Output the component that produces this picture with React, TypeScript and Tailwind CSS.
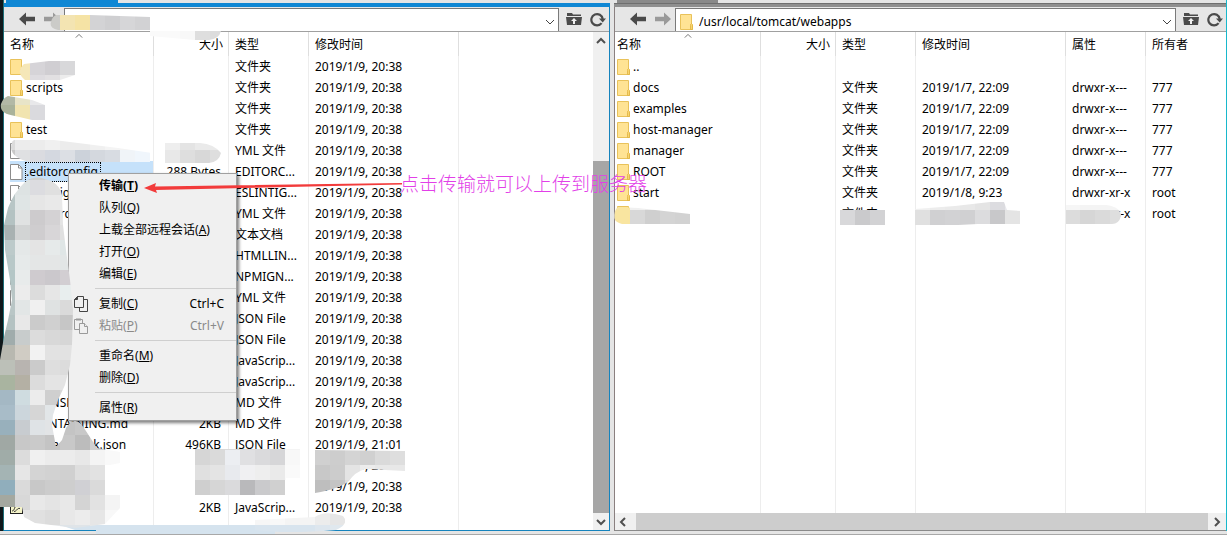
import React from 'react';

interface FileRow {
  name: string;
  kind?: 'folder' | 'file' | 'script' | 'none';
  size?: string;
  type?: string;
  time?: string;
  perm?: string;
  owner?: string;
  selected?: boolean;
}

const T = '2019/1/9, 20:38';

const localFiles: FileRow[] = [
  { name: '', kind: 'folder', type: '文件夹', time: T },
  { name: 'scripts', kind: 'folder', type: '文件夹', time: T },
  { name: '', kind: 'none', type: '文件夹', time: T },
  { name: 'test', kind: 'folder', type: '文件夹', time: T },
  { name: '', kind: 'file', type: 'YML 文件', time: T },
  { name: '.editorconfig', kind: 'file', size: '288 Bytes', type: 'EDITORC...', time: T, selected: true },
  { name: '.eslintignore', kind: 'file', type: 'ESLINTIG...', time: T },
  { name: '.eslintrc.yml', kind: 'file', type: 'YML 文件', time: T },
  { name: '', kind: 'file', type: '文本文档', time: T },
  { name: '', kind: 'file', type: 'HTMLLIN...', time: T },
  { name: '', kind: 'file', type: 'NPMIGN...', time: T },
  { name: '', kind: 'file', type: 'YML 文件', time: T },
  { name: '', kind: 'none', type: 'JSON File', time: T },
  { name: '', kind: 'none', type: 'JSON File', time: T },
  { name: '', kind: 'none', type: 'JavaScrip...', time: T },
  { name: '', kind: 'none', type: 'JavaScrip...', time: T },
  { name: 'LICENSE.md', kind: 'none', type: 'MD 文件', time: T },
  { name: 'MAINTAINING.md', kind: 'none', size: '2KB', type: 'MD 文件', time: T },
  { name: 'package-lock.json', kind: 'none', size: '496KB', type: 'JSON File', time: '2019/1/9, 21:01' },
  { name: '', kind: 'none', time: T },
  { name: '', kind: 'none', time: T },
  { name: '', kind: 'script', size: '2KB', type: 'JavaScrip...', time: T },
];

const remoteFiles: FileRow[] = [
  { name: '..', kind: 'folder' },
  { name: 'docs', kind: 'folder', type: '文件夹', time: '2019/1/7, 22:09', perm: 'drwxr-x---', owner: '777' },
  { name: 'examples', kind: 'folder', type: '文件夹', time: '2019/1/7, 22:09', perm: 'drwxr-x---', owner: '777' },
  { name: 'host-manager', kind: 'folder', type: '文件夹', time: '2019/1/7, 22:09', perm: 'drwxr-x---', owner: '777' },
  { name: 'manager', kind: 'folder', type: '文件夹', time: '2019/1/7, 22:09', perm: 'drwxr-x---', owner: '777' },
  { name: 'ROOT', kind: 'folder', type: '文件夹', time: '2019/1/7, 22:09', perm: 'drwxr-x---', owner: '777' },
  { name: 'start', kind: 'folder', type: '文件夹', time: '2019/1/8, 9:23', perm: 'drwxr-xr-x', owner: 'root' },
  { name: '', kind: 'folder', type: '文件夹', perm: 'drwxr-xr-x', owner: 'root' },
];

/* ---------- icons ---------- */

const FolderIcon = () => (
  <svg className="h-4 w-[13px] shrink-0" viewBox="0 0 13 16">
    <path d="M.5 .5h11v11h1v4H.5z" fill="#ffe394" stroke="#e9c25a" />
    <path d="M10.5 11.5v-1l1-1 1 1v5h-2z" fill="#f7d46f" stroke="#dfb341" strokeWidth=".8" />
  </svg>
);

const FileIcon = () => (
  <svg className="h-4 w-[13px] shrink-0" viewBox="0 0 13 16">
    <path d="M.5 .5h8l3.500 3.500v11.500H.5z" fill="#fff" stroke="#8c8c8c" />
    <path d="M8.5 .5v3.500h3.500" fill="none" stroke="#8c8c8c" />
  </svg>
);

const ScriptIcon = () => (
  <svg className="h-4 w-[13px] shrink-0" viewBox="0 0 13 16">
    <rect x=".5" y="2.5" width="12" height="11" fill="#f4f3c8" stroke="#222" />
    <path d="M2 11c3 0 2-5 5-6 2 0 3 1 4 0M4 11.500c3 0 3-4 6-3M3 5l2 1" fill="none" stroke="#333" />
  </svg>
);

const ArrowIcon = ({ flip = false }: { flip?: boolean }) => (
  <svg className={flip ? 'h-4 w-4 text-[#9a9a9a]' : 'h-4 w-4 text-[#4a4a4a]'} viewBox="0 0 16 16" fill="currentColor">
    <path d={flip ? 'M16 8 9 1.500v4.200H0v4.600h9v4.200z' : 'M0 8l7-6.500v4.200h9v4.600H7v4.200z'} />
  </svg>
);

const UpFolderIcon = () => (
  <svg className="h-4 w-4" viewBox="0 0 16 16">
    <path d="M1 2h5l1 1.500h8V5H1zM0 6h16l-1 8H1z" fill="#4b4b4b" />
    <path d="M8 7l3 3H9v3H7v-3H5z" fill="#f0f0f0" />
  </svg>
);

const RefreshIcon = () => (
  <svg className="h-4 w-4" viewBox="0 0 16 16">
    <path d="M11.600 12.200A5.700 5.700 0 1 1 12.700 8" fill="none" stroke="#4b4b4b" strokeWidth="2.200" />
    <path d="M9 7.500h7l-3.300 4z" fill="#4b4b4b" />
  </svg>
);

const Chevron = ({ d, className }: { d: string; className: string }) => (
  <svg className={className} viewBox="0 0 10 10" fill="none" stroke="currentColor">
    <path d={d} />
  </svg>
);

const UP = 'M1 7l4-4 4 4';
const DOWN = 'M1 3l4 4 4-4';
const LEFT = 'M7 1L3 5l4 4';
const RIGHT = 'M3 1l4 4-4 4';

const CopyIcon = () => (
  <svg className="h-4 w-4" viewBox="0 0 16 16" fill="#f0f0f0" stroke="#444">
    <path d="M6.500 3.500h8v12h-8z" />
    <path d="M4.500 .5h6v11h-9v-8z" />
    <path d="M4.500 .5v3h-3z" fill="#444" />
  </svg>
);

const PasteIcon = () => (
  <svg className="h-4 w-4" viewBox="0 0 16 16" fill="#f0f0f0" stroke="#9a9a9a">
    <path d="M1.500 1.500h8v10h-8z" />
    <path d="M3 1.500h5" strokeWidth="2" />
    <path d="M6.500 5.500h5l3 3v7h-8z" />
    <path d="M11.500 5.500v3h3" />
  </svg>
);

/* ---------- panes ---------- */

function Toolbar({ label, path, withFolder }: { label: string; path: string; withFolder?: boolean }) {
  return (
    <div className="flex h-[25px] shrink-0 border-b border-[#a0a0a0] bg-[#e6e6e6] pl-[15px] pr-[3px]">
      <div className="flex items-center gap-[9px]">
        <button type="button" aria-label="后退"><ArrowIcon /></button>
        <button type="button" aria-label="前进"><ArrowIcon flip /></button>
      </div>
      <div className="ml-1 mt-px flex min-w-0 flex-1 items-center border border-b-0 border-[#7a7a7a] bg-white pl-1 pt-1">
        {withFolder && <FolderIcon />}
        <input
          aria-label={label}
          defaultValue={path}
          className="ml-1.5 min-w-0 flex-1 bg-transparent text-[12px] leading-5 outline-none"
        />
        <button type="button" aria-label="展开路径" className="px-[3px]">
          <Chevron d={DOWN} className="h-2.5 w-2.5 text-[#444]" />
        </button>
      </div>
      <div className="ml-[7px] flex items-center gap-2">
        <button type="button" aria-label="上级目录"><UpFolderIcon /></button>
        <button type="button" aria-label="刷新"><RefreshIcon /></button>
      </div>
    </div>
  );
}

interface FileTableProps {
  rows: FileRow[];
  remote?: boolean;
}

function FileTable({ rows, remote = false }: FileTableProps) {
  const line = 'border-r border-[#ededed]';
  const cell = `${line} overflow-hidden whitespace-nowrap pl-1.5`;
  const head = 'relative border-r border-[#dedede] pl-1.5 text-left font-normal';
  const first = remote ? 'pl-[2px]' : 'pl-[6px]';

  return (
    <table className="h-full w-full table-fixed border-separate border-spacing-0 text-[12px] leading-[21px] text-black">
      <colgroup>
        <col className={remote ? 'w-[146px]' : 'w-[150px]'} />
        <col className="w-[75px]" />
        <col className="w-[80px]" />
        <col className="w-[150px]" />
        {remote && <col className="w-[80px]" />}
        <col />
      </colgroup>
      <thead>
        <tr className="h-6">
          <th className={`relative border-r border-[#dedede] text-left font-normal ${first}`}>
            名称
            <Chevron d={UP} className="absolute left-1/2 top-0 h-2 w-2 -translate-x-1/2 text-[#555]" />
          </th>
          <th className="border-r border-[#dedede] pr-[5px] text-right font-normal">大小</th>
          <th className={head}>类型</th>
          <th className={head}>修改时间</th>
          {remote && <th className={head}>属性</th>}
          <th className="pl-1.5 text-left font-normal">{remote ? '所有者' : ''}</th>
        </tr>
      </thead>
      <tbody>
        {rows.map((r, i) => (
          <tr key={i} className="h-[21px]">
            <td className={`${line} ${first} overflow-hidden`}>
              <div className={r.selected ? 'flex h-[21px] items-center bg-[#c5e1fa]' : 'flex h-[21px] items-center'}>
                {r.kind === 'folder' && <FolderIcon />}
                {r.kind === 'file' && <FileIcon />}
                {r.kind === 'script' && <ScriptIcon />}
                {r.kind === 'none' && <span className="w-[13px] shrink-0" />}
                <span
                  className={
                    r.selected
                      ? 'ml-0.5 whitespace-nowrap border border-dotted border-black pr-0.5 leading-[18px]'
                      : 'ml-[3px] whitespace-nowrap'
                  }
                >
                  {r.name}
                </span>
              </div>
            </td>
            <td className={`${line} whitespace-nowrap pr-[7px] text-right`}>{r.size}</td>
            <td className={cell}>{r.type}</td>
            <td className={cell}>{r.time}</td>
            {remote && <td className={cell}>{r.perm}</td>}
            <td className="pl-1.5">{r.owner}</td>
          </tr>
        ))}
        {/* filler keeps the column rules running to the bottom */}
        <tr>
          <td className={line} />
          <td className={line} />
          <td className={line} />
          <td className={line} />
          {remote && <td className={line} />}
          <td />
        </tr>
      </tbody>
    </table>
  );
}

function LocalPane() {
  return (
    <section className="flex min-w-0 flex-col" aria-label="本地">
      <div className="h-[3px] shrink-0 bg-[#e5e5e5] pl-0.5">
        <div className="h-full w-28 bg-[#0f87d4]" />
      </div>
      <div className="h-1 shrink-0 bg-[#0f87d4]" />
      <div className="flex min-h-0 flex-1 flex-col border-b border-r border-[#1583bd] bg-white">
        <Toolbar label="本地路径" path="" />
        <div className="flex min-h-0 flex-1">
          <div className="min-w-0 flex-1"><FileTable rows={localFiles} /></div>
          <div className="flex w-4 shrink-0 flex-col items-center bg-[#f0f0f0]">
            <button type="button" aria-label="向上滚动" className="flex h-[18px] items-center">
              <Chevron d={UP} className="h-2.5 w-2.5 stroke-2 text-[#505050]" />
            </button>
            <div className="flex min-h-0 w-full flex-1 flex-col justify-end">
              <div className="h-[76%] bg-[#a6a6a6]" />
            </div>
            <button type="button" aria-label="向下滚动" className="flex h-[17px] items-center">
              <Chevron d={DOWN} className="h-2.5 w-2.5 stroke-2 text-[#505050]" />
            </button>
          </div>
        </div>
      </div>
    </section>
  );
}

function RemotePane() {
  return (
    <section className="flex min-w-0 flex-col" aria-label="远程">
      <div className="h-[3px] shrink-0 bg-[#e5e5e5] pl-[3px]">
        <div className="h-full w-[101px] bg-[#8a8a8a]" />
      </div>
      <div className="h-1 shrink-0 border-t border-[#6f6f6f] bg-[#8f8f8f]" />
      <div className="flex min-h-0 flex-1 flex-col border-b border-l border-b-[#8a8a8a] border-l-[#8a8080] bg-white">
        <Toolbar label="远程路径" path="/usr/local/tomcat/webapps" withFolder />
        <div className="min-h-0 flex-1"><FileTable rows={remoteFiles} remote /></div>
        <div className="flex h-[17px] shrink-0 items-center bg-[#f0f0f0]">
          <button type="button" aria-label="向左滚动" className="pl-[3px] pr-2">
            <Chevron d={LEFT} className="h-2.5 w-2.5 stroke-2 text-[#505050]" />
          </button>
          <div className="h-full flex-1 bg-[#cdcdcd]" />
          <button type="button" aria-label="向右滚动" className="px-1">
            <Chevron d={RIGHT} className="h-2.5 w-2.5 stroke-2 text-[#505050]" />
          </button>
        </div>
      </div>
    </section>
  );
}

/* ---------- context menu ---------- */

interface MenuEntry {
  label: string;
  hot: string;
  keys?: string;
  icon?: React.ReactNode;
  bold?: boolean;
  disabled?: boolean;
}

const menuGroups: MenuEntry[][] = [
  [
    { label: '传输', hot: 'T', bold: true },
    { label: '队列', hot: 'Q' },
    { label: '上载全部远程会话', hot: 'A' },
    { label: '打开', hot: 'O' },
    { label: '编辑', hot: 'E' },
  ],
  [
    { label: '复制', hot: 'C', keys: 'Ctrl+C', icon: <CopyIcon /> },
    { label: '粘贴', hot: 'P', keys: 'Ctrl+V', icon: <PasteIcon />, disabled: true },
  ],
  [
    { label: '重命名', hot: 'M' },
    { label: '删除', hot: 'D' },
  ],
  [{ label: '属性', hot: 'R' }],
];

function ContextMenu() {
  return (
    <div
      role="menu"
      className="absolute left-[68px] top-[173px] w-[169px] border border-[#a0a0a0] bg-[#f0f0f0] py-px text-[12px] shadow-[2px_2px_3px_rgba(0,0,0,0.5)]"
    >
      {menuGroups.map((group, g) => (
        <div key={g}>
          {g > 0 && <div className="ml-[26px] h-1 border-b border-[#cfcfcf]" />}
          <div className={g > 0 ? 'pt-1' : ''}>
            {group.map((m) => (
              <button
                key={m.hot}
                type="button"
                role="menuitem"
                disabled={m.disabled}
                className={`flex h-[22px] w-full items-center pl-1 pr-3 text-left ${m.bold ? 'font-bold' : ''} ${
                  m.disabled ? 'text-[#8a8a8a]' : 'text-black'
                }`}
              >
                <span className="w-[26px] shrink-0">{m.icon}</span>
                <span className="flex-1 whitespace-nowrap">
                  {m.label}(<u className="underline-offset-1">{m.hot}</u>)
                </span>
                <span>{m.keys}</span>
              </button>
            ))}
          </div>
        </div>
      ))}
    </div>
  );
}

/* ---------- mosaic brush over private names ---------- */

interface Patch {
  id: string;
  x: number;
  y: number;
  clip: string;
  rows: string[];
}

const CELL = 15;

// each row is a list of cell colours, "-" leaves the cell open
const patches: Patch[] = [
  {
    id: 'names',
    x: 0,
    y: 165,
    clip: 'M25 182Q34 175 45 179Q59 182 62 195L63 225L66 250L70 280L73 310L72 345L70 365L65 385L58 400L53 415L52 425L56 447L62 440L66 428Q75 414 84 428L97 448L120 452V463L105 466V495H120V508L105 524L75 528L35 523L24 517L22 507H0V360L4 337L8 320L12 300L10 280L5 250L4 225L8 208Q14 192 25 182Z',
    rows: [
      '- bcc8c8 d0d0d0 d6d6d6',
      'b8c6c6 dde3e3 dcdce0 e0e0e0 e2e2e2',
      'b8c6c6 dfe5e5 e6e6e6 e9e9e9 e9e9e9',
      'b4c2c2 e0e2e2 cdcbcd d4d2d4 e4e4e4',
      'a9b2b2 d2d4d4 cfcdcf d8d6d8 e0e0e0',
      'bccaca e4e8e8 e4e4e4 e6eaea dfe6e6',
      'b8c8c8 e6eaea e4e6e6 e4e6e6 e2e6e6',
      'b4c6c6 e8ebeb cfcbcf cbc8cc d2ced2',
      'b9c6c6 ececec dcdcdc e6e6e6 e8eeee',
      'b9c6c6 e2e6e6 f0f0f0 dfe2e2 dadada',
      'b4c2c2 e8e8e8 cbcbcb d0d0d0 c6c6c6',
      'a0acac c8cccc dcdcdc d8d8d8 d6d6d6',
      'b8b8b0 d0ccc4 f2f2f2 e2e2e2 e2e2e2',
      'bcc0b8 b8b4b0 cbcbcb dedede dcdcdc',
      'a9b4a0 b4b0a4 dcdcdc e4e4e4 e4e4e4',
      'a4b8c4 cfdce0 ececec cfcfcf d8d8d8',
      'a8bcc8 ccd6dc d6d6d6 e2e6e8 e2e6e8',
      '98b0bc c8ccd0 dfe3e6 e2e4e6 c4c4c4 c8c8c8 cccccc',
      'a0a8a4 c8c8c8 cacaca c4c4c4 c8c8c8 bcbcbc d0d0d0',
      'a0aca8 dcdcdc f0f0f0 ececec ececec e8e8e8 f4f4f4 f9f9f9',
      'a4b4b4 e6e6e6 d4d4d4 d2d2d2 d0d0d0 dedede e2e2e2 -',
      '90aebc dadada c8c8c8 cccccc cecece d0d0d4 dadada -',
      'a4a8a0 d8d8d8 e8e8e8 e4e4e4 e8e8e8 d4d4d4 e2e2e2 f4f4f4',
      '- e4e4e4 e0e0e0 dcdcdc e8e8e8 ececec e6e6e6 f8f8f8',
      '- e8e8e8 e8e8e8 e4e6e8 dfe4e8 dfe4e8 e8e8e8 -',
    ],
  },
  {
    id: 'path',
    x: 45,
    y: 15,
    clip: 'M56 15h34l60 2v13H58q-9-2-7-8 1-5 5-7z',
    rows: ['cbcbc8 f3e4b2 f5e3a5 d3d3d5 cfcfd1 d6d6d8 d2d2d4'],
  },
  {
    id: 'dir0',
    x: 15,
    y: 60,
    clip: 'M24 64l25-3h26v14l-15 5H25q-10-8-1-16z',
    rows: ['f5e7b8 d6d4d8 d0ced2 d8d8da', 'f5e7b8 dedce0 e2e0e2 ececec'],
  },
  {
    id: 'dir2',
    x: 0,
    y: 90,
    clip: 'M8 96l24 4 13 5v18l-30-7q-16-2-14-12 2-6 7-8z',
    rows: ['b2b9a6 e8e4c8 e8e8ea', 'a9b29a f1e4b0 dadade'],
  },
  {
    id: 'yml',
    x: 0,
    y: 135,
    clip: 'M14 140h40l64 8 34 5v9H30q-18-4-19-14 0-6 3-8z',
    rows: ['dcdcdc ececec ececec f0f0f0 ececec ececec f0f0f0 f4f4f4 f4f4f4 -', 'c8c8c8 dfe0e2 dadbe0 d4d8e0 dcdfe4 ccd2da d4d8de d8dce2 f0f4f8 f0f6fc'],
  },
  {
    id: 'size4',
    x: 165,
    y: 135,
    clip: 'M165 143h35q14 1 21 10-2 9-12 10h-44z',
    rows: ['eeeeee e4e4e4 eaeaea eaeaea', 'e8e8e8 dedede d8d8d8 dedede'],
  },
  {
    id: 'head',
    x: 150,
    y: 30,
    clip: 'M150 31h71q-2 8-12 9h-14l-45-4z',
    rows: ['fafafa fafafa f8f8f8 dedede dcdcdc'],
  },
  {
    id: 'types',
    x: 180,
    y: 435,
    clip: 'M180 449h120v29h-14v17h-91v-45h-15z',
    rows: [
      '- d4d4d4 d8d8d8 dadada dadada dadada dadada f4f4f4',
      'ffffff d6d6d6 dadada eceef2 e0e0e2 dadadc d6d6d8 f8f8f8',
      '- e0e0e0 e4e4e4 e8eaee f0f0f2 eeeeee eaeaea fafafa',
      '- cfcfcf d6d6d6 dadadc b9b9bb cacacc d0d0d0 -',
    ],
  },
  {
    id: 'times',
    x: 315,
    y: 450,
    clip: 'M315 450l90 1v20q-20-1-40-2-10 3-16 12-10 8-34 12z',
    rows: ['d0d0d0 cdcdcd d4d4d4 d0d0d0 dadada dedede', 'c8c8c8 cccccc e4e4e4 ececec e8e8e8 e8e8e8', 'bebebe c4c4c4 dcdcdc e8e8e8 - -'],
  },
  {
    id: 'foot',
    x: 255,
    y: 510,
    clip: 'M255 520l60-3q10-7 28-1 7 8-7 14-50 4-81 0z',
    rows: ['f6f6f6 f8f8f8 f4f4f4 f4f4f4 ececec e6e6e6', 'd8e4ee d8e4ee d8e4ee d8e4ee dde6ee e0e8ee'],
  },
  {
    id: 'remote-name',
    x: 600,
    y: 195,
    clip: 'M618 207l20 1 52 6v10h-68q-9-2-8-9 1-6 4-8z',
    rows: ['e0d8b8 f9e5a0 f0f0f0 ececec eeeeee f0f0f0', 'd0c8b0 f9e5a0 d8d8d8 cfcfcf d4d4d4 d2d2d2'],
  },
  {
    id: 'remote-type',
    x: 840,
    y: 210,
    clip: 'M840 210h45v15h-45z',
    rows: ['d8d8da cacacc d2d2d4'],
  },
  {
    id: 'remote-time',
    x: 915,
    y: 195,
    clip: 'M915 209l40-3 35-4h14l3 8 14 1v13h-43l-20 1h-43z',
    rows: ['f0f0f0 ececec eaeaea e8e8e8 e4e4e4 dcdce0 e8e8ec', 'e0e0e0 d0d0d2 d2d2d4 d0d0d2 dcdcde c8c8ca e4e4e4'],
  },
  {
    id: 'remote-perm',
    x: 1065,
    y: 195,
    clip: 'M1066 205h40q15 2 15 11-2 8-9 8h-46z',
    rows: ['f6f6f6 f4f4f4 f4f4f4 f4f4f4', 'dcdcdc d6d6d6 dadada dedede'],
  },
];

function Mosaic() {
  return (
    <svg className="pointer-events-none absolute inset-0 h-full w-full" aria-hidden="true">
      <path d="M60 525h276l-18 5H275v4H96v-4H75z" fill="#d5e3ee" />
      {patches.map((p) => (
        <g key={p.id} clipPath={`url(#clip-${p.id})`} shapeRendering="crispEdges">
          <clipPath id={`clip-${p.id}`}><path d={p.clip} /></clipPath>
          {p.rows.map((row, j) =>
            row.split(' ').map((c, i) =>
              c === '-' ? null : (
                <rect key={`${j}-${i}`} x={p.x + i * CELL} y={p.y + j * CELL} width={CELL} height={CELL} fill={`#${c}`} />
              ),
            ),
          )}
        </g>
      ))}
      <path d="M144 188l12-5-1 3.500L402 183v1.500L156 190l1 3z" fill="#f23b3b" />
    </svg>
  );
}

export default function App() {
  return (
    <main className="relative flex h-screen min-h-[535px] w-full flex-col overflow-hidden bg-[#e5e5e5] font-['Noto_Sans','Noto_Sans_CJK_SC',sans-serif]">
      <div className="flex min-h-0 flex-1 border-r border-[#18b8cc]">
        <div className="w-1 shrink-0 border-r border-[#1d6f78] bg-[#10181b]" />
        <div className="grid min-w-0 flex-1 grid-cols-[606fr_612fr] grid-rows-1 gap-1">
          <LocalPane />
          <RemotePane />
        </div>
      </div>
      <div className="h-1 shrink-0 border-b border-[#a8a8a8]" />

      <ContextMenu />
      <Mosaic />
      <p className="absolute left-[400px] top-[169px] whitespace-nowrap font-['Noto_Sans_CJK_SC',sans-serif] text-[19px] font-light leading-7 text-[#e23fe8]">
        点击传输就可以上传到服务器
      </p>
    </main>
  );
}
